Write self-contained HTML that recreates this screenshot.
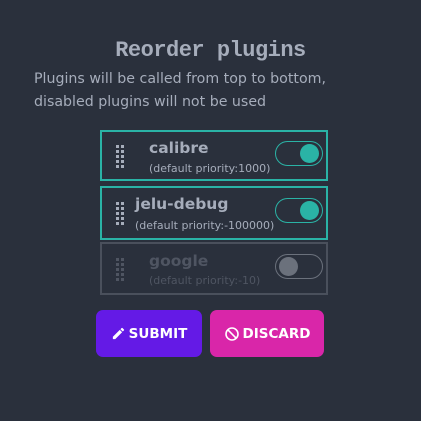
<!DOCTYPE html><html><head><style>
body{margin:0;width:421px;height:421px;background:#2a303c;font-family:"DejaVu Sans","Liberation Sans",sans-serif;color:#a6adbb;position:relative;overflow:hidden}
.t{position:absolute;left:0;width:421px;text-align:center;top:38px;font-family:"Liberation Mono",monospace;font-size:22px;color:#a6adbb;font-weight:bold;letter-spacing:-0.5px}
.p{position:absolute;left:34px;top:68px;font-size:14.2px;line-height:23px}
.box{position:absolute;left:100px;width:224px;border:2px solid #2ab3a6}
.box.d{border-color:#4a505c}
.h{position:absolute;left:14px;width:8px;display:grid;grid-template-columns:3px 3px;gap:2px 2px}
.h i{width:3px;height:3px;background:#a6adbb;display:block}
.n{position:absolute;font-weight:bold;font-size:15.5px}
.s{position:absolute;font-size:11px}
.tg{position:absolute;left:173px;width:46px;height:23px;border:1.5px solid #2ab3a6;border-radius:13px}
.tg b{position:absolute;right:3px;top:2px;width:19px;height:19px;border-radius:50%;background:#2ab3a6}
.d .tg{border-color:#6b717c}.d .tg b{left:3px;right:auto;background:#6b717c}
.d .n,.d .s{color:#4f5562}.d .h i{background:#4f5562}
.btn{position:absolute;top:310px;height:47px;border-radius:7px;color:#fff;font-weight:bold;font-size:13.5px;display:flex;align-items:center;justify-content:center;gap:3px}
</style></head><body>
<div class="t">Reorder plugins</div>
<div class="p">Plugins will be called from top to bottom,<br>disabled plugins will not be used</div>
<div class="box" style="top:130px;height:47px">
<div class="h" style="top:13px"><i></i><i></i><i></i><i></i><i></i><i></i><i></i><i></i><i></i><i></i></div>
<div class="n" style="left:47px;top:7px">calibre</div><div class="s" style="left:47px;top:30px">(default priority:1000)</div>
<div class="tg" style="top:9px"><b></b></div></div>
<div class="box" style="top:186px;height:50px">
<div class="h" style="top:14px"><i></i><i></i><i></i><i></i><i></i><i></i><i></i><i></i><i></i><i></i></div>
<div class="n" style="left:33px;top:7px">jelu-debug</div><div class="s" style="left:33px;top:31px">(default priority:-100000)</div>
<div class="tg" style="top:10px"><b></b></div></div>
<div class="box d" style="top:242px;height:49px">
<div class="h" style="top:14px"><i></i><i></i><i></i><i></i><i></i><i></i><i></i><i></i><i></i><i></i></div>
<div class="n" style="left:47px;top:8px">google</div><div class="s" style="left:47px;top:30px">(default priority:-10)</div>
<div class="tg" style="top:10px"><b></b></div></div>
<div class="btn" style="left:96px;width:106px;background:#641ae6"><svg width="15" height="15" viewBox="0 0 24 24"><path fill="#fff" d="M3 17.25V21h3.75L17.8 9.94l-3.75-3.75zM20.7 7.04a1 1 0 000-1.41l-2.34-2.34a1 1 0 00-1.41 0l-1.83 1.83 3.75 3.75z"/></svg>SUBMIT</div>
<div class="btn" style="left:210px;width:114px;background:#d926a9"><svg width="16" height="16" viewBox="0 0 24 24"><circle cx="12" cy="12" r="9" fill="none" stroke="#fff" stroke-width="2.4"/><path d="M5.6 5.6l12.8 12.8" stroke="#fff" stroke-width="2.4"/></svg>DISCARD</div>
</body></html>
